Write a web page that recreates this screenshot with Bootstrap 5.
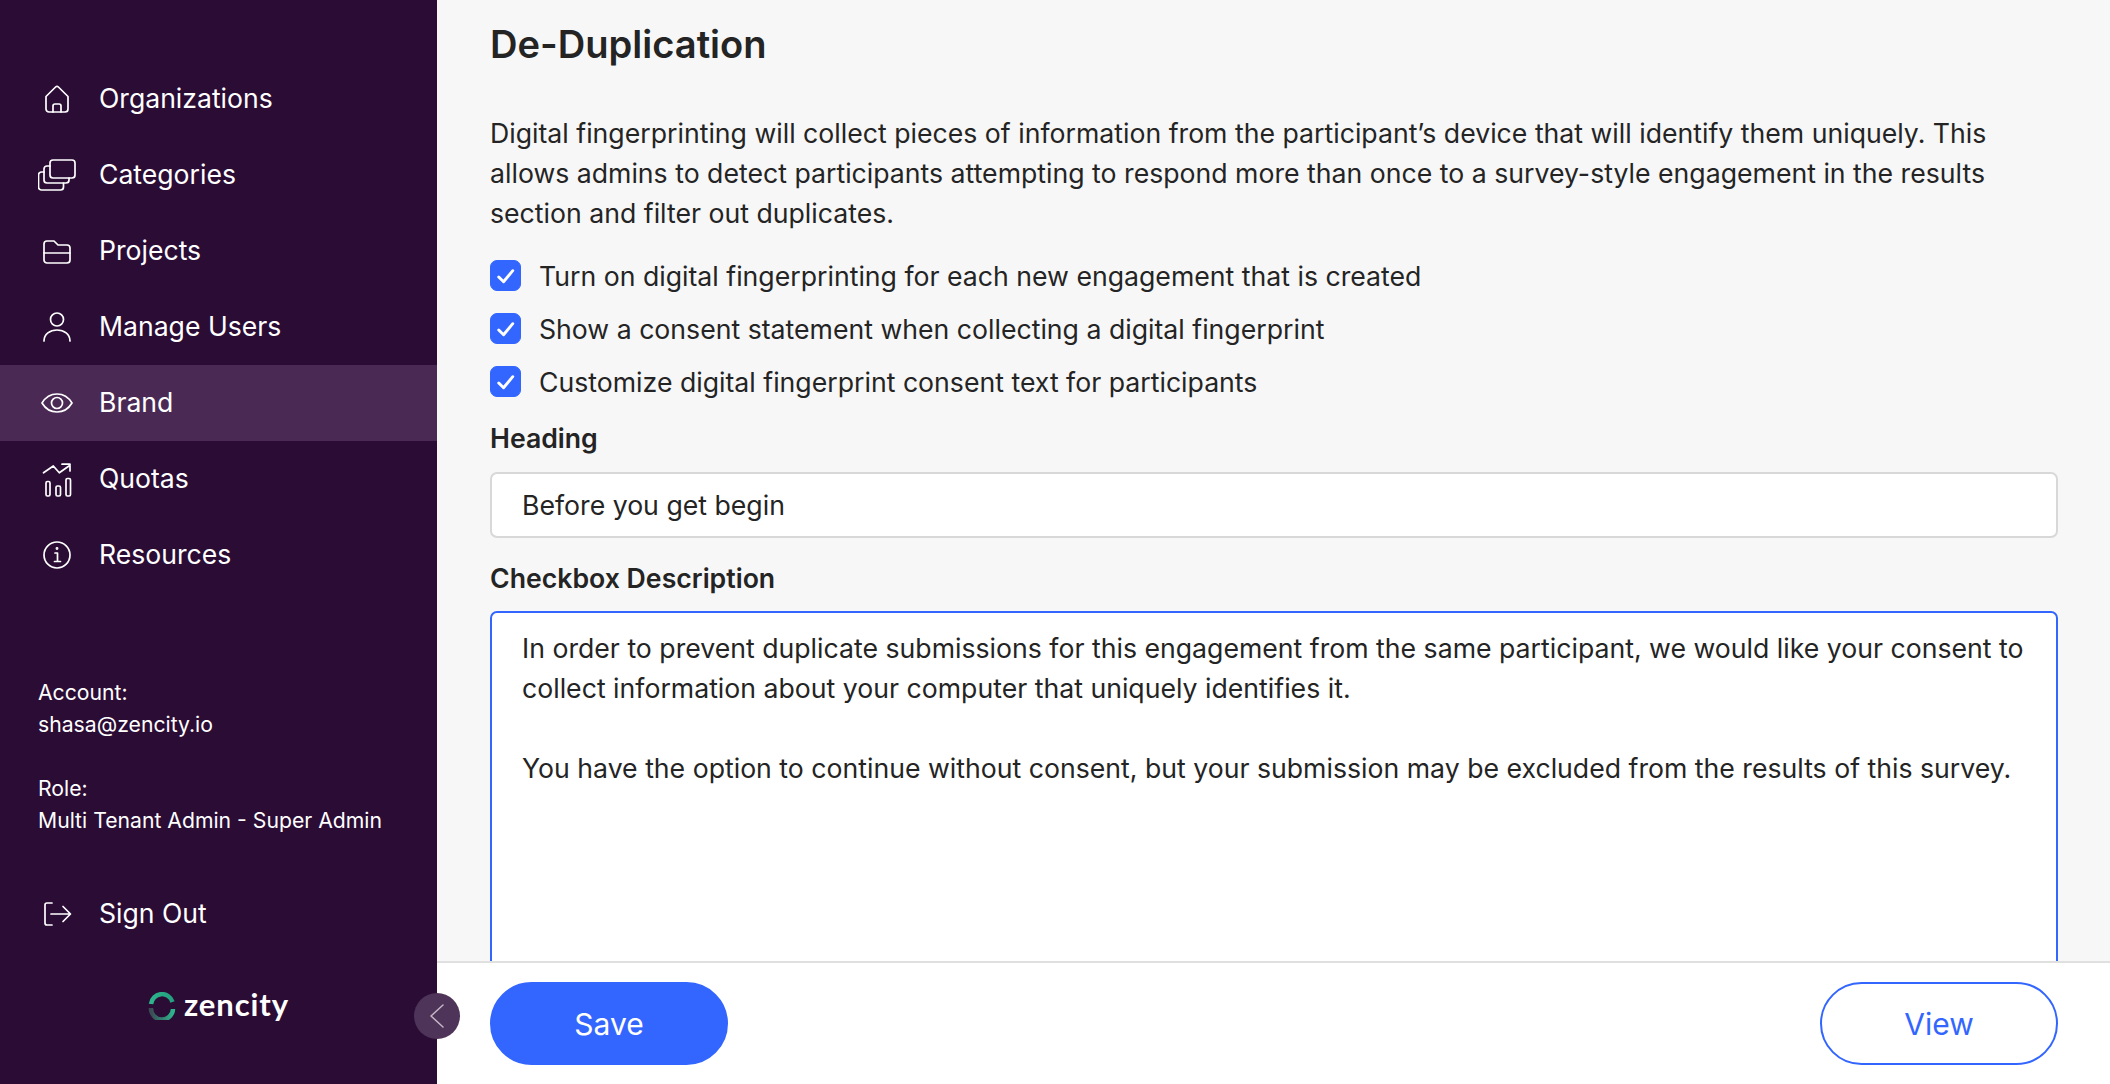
<!DOCTYPE html>
<html lang="en">
<head>
<meta charset="utf-8">
<title>De-Duplication</title>
<link href="https://cdn.jsdelivr.net/npm/bootstrap@5.3.0/dist/css/bootstrap.min.css" rel="stylesheet">
<style>
html,body{height:100%;overflow:hidden}
body{font-family:Inter,"Liberation Sans",sans-serif;background:#fff;color:#242424;font-size:26.67px;line-height:40px}
.app-shell{height:1084px;width:2110px}
.side{width:437px;flex:0 0 437px;background:#2b0c35;color:#fff;padding-top:61px}
.side-link{height:76px;padding:0 0 2px 38px;color:#fff;font-size:26.6px;gap:23px;text-decoration:none}
.side-link:hover{color:#fff}
.side-link.is-on{background:#4a2a55}
.ico{width:38px;height:38px;flex:0 0 38px;fill:none;stroke:#fff;stroke-width:1.7;stroke-linecap:round;stroke-linejoin:round;margin-top:2px}
.who{padding:0 0 0 38px;margin-top:83px;font-size:21.2px;line-height:32px}
.who p{margin:0 0 32px}
.sign{margin-top:40px}
.brand-row{margin-top:24px;gap:8px;height:60px}
.brand-word{font-size:31px;font-weight:700;font-family:Lato,Inter,sans-serif;line-height:1;letter-spacing:.9px;padding-bottom:4px}
.main-col{min-width:0}
.scroller{background:#f7f7f7;overflow:hidden;padding:18px 52px 0 53px}
.page-title{font-size:38.1px;font-weight:600;line-height:52px;margin:0 0 43px}
.intro{margin:0 0 27px}
.chk{display:flex;align-items:center;gap:18px;min-height:30px;padding:0;margin:0 0 22px}
.chk .form-check-input{width:31px;height:31px;margin:0;border-radius:7px;flex:none;float:none;background-color:#3366ff;border-color:#3366ff;background-size:100%;background-image:url("data:image/svg+xml,%3csvg xmlns='http://www.w3.org/2000/svg' viewBox='0 0 30 30'%3e%3cpath fill='none' stroke='%23fff' stroke-linecap='round' stroke-linejoin='round' stroke-width='3' d='M8 16.500l5 5 9.500-11.500'/%3e%3c/svg%3e")}
.chk .form-check-label{line-height:30px}
.chk-last{margin-bottom:21px}
.fld-label{font-weight:600;line-height:40px;margin:0 0 13px;display:block}
.scroller .form-control{font-size:26.67px;line-height:40px;color:#242424;border:2px solid #d8d8d8;border-radius:7px;padding:11px 30px;height:66px;box-shadow:none;margin-bottom:20px}
.scroller input.form-control{margin-top:14px}
.scroller textarea.form-control{height:500px;border-color:#3366ff;padding:15px 30px;resize:none}
.foot{height:123px;flex:0 0 123px;border-top:2px solid #e0e0e0;background:#fff;padding:0 52px 0 53px}
.foot .btn{width:238px;height:83px;font-size:30px;line-height:1;border-width:2px}
.go{background:#3366ff;border-color:#3366ff;color:#fff}
.ghost{background:#fff;border-color:#3366ff;color:#3366ff}
.collapse-dot{position:absolute;left:414px;top:993px;width:46px;height:46px;background:#4e3458;border-radius:50%;display:flex;align-items:center;justify-content:center}
.collapse-dot svg{width:24px;height:24px;fill:none;stroke:#c4b8c8;stroke-width:1.5;stroke-linecap:round;stroke-linejoin:round}
</style>
</head>
<body>
<div class="app-shell d-flex position-relative">
  <aside class="side d-flex flex-column">
    <nav class="nav flex-column flex-nowrap">
      <a class="side-link d-flex align-items-center" href="#">
        <svg class="ico" viewBox="0 0 38 38"><path d="M8 16.500 17.600 7a2 2 0 0 1 2.800 0L30 16.500V29a3 3 0 0 1-3 3H11a3 3 0 0 1-3-3z"/><path d="M15 32v-6a2 2 0 0 1 2-2h4a2 2 0 0 1 2 2v6"/></svg>Organizations</a>
      <a class="side-link d-flex align-items-center" href="#">
        <svg class="ico" viewBox="0 0 38 38"><rect x="12" y="4" width="25" height="18" rx="3"/><path d="M12 10H9a3 3 0 0 0-3 3v11a3 3 0 0 0 3 3h19a3 3 0 0 0 3-3v-2"/><path d="M6 16H3.500a3 3 0 0 0-3 3v12a3 3 0 0 0 3 3h19a3 3 0 0 0 3-3v-4"/></svg>Categories</a>
      <a class="side-link d-flex align-items-center" href="#">
        <svg class="ico" viewBox="0 0 38 38"><path d="M6 12a3 3 0 0 1 3-3h7l4 4h9a3 3 0 0 1 3 3v12a3 3 0 0 1-3 3H9a3 3 0 0 1-3-3z"/><path d="M6 21h26"/></svg>Projects</a>
      <a class="side-link d-flex align-items-center" href="#">
        <svg class="ico" viewBox="0 0 38 38"><circle cx="19" cy="11.500" r="6.500"/><path d="M6 33c0-7 6-11 13-11s13 4 13 11"/></svg>Manage Users</a>
      <a class="side-link is-on d-flex align-items-center" href="#">
        <svg class="ico" viewBox="0 0 38 38"><path d="M4 19c3.500-5.800 9-9 15-9s11.500 3.200 15 9c-3.500 5.800-9 9-15 9S7.500 24.800 4 19z"/><circle cx="19" cy="19" r="5.500"/></svg>Brand</a>
      <a class="side-link d-flex align-items-center" href="#">
        <svg class="ico" viewBox="0 0 38 38"><path d="M5.500 12.800 15.300 6l6 6.800L32 5.200M24 4.200h8V11"/><rect x="8" y="21.500" width="4" height="14.500" rx="1.500"/><rect x="18" y="26" width="4.500" height="10" rx="1.500"/><rect x="28" y="18.500" width="4.500" height="17.500" rx="1.500"/></svg>Quotas</a>
      <a class="side-link d-flex align-items-center" href="#">
        <svg class="ico" viewBox="0 0 38 38"><circle cx="19" cy="19" r="13"/><path d="M17 17h2.500v8M16.500 25.500h6"/><circle cx="19" cy="12.500" r=".6"/></svg>Resources</a>
    </nav>
    <div class="who">
      <p>Account:<br>shasa@zencity.io</p>
      <p class="mb-0">Role:<br>Multi Tenant Admin - Super Admin</p>
    </div>
    <a class="side-link sign d-flex align-items-center" href="#">
      <svg class="ico" viewBox="0 0 38 38"><path d="M14 8H9a2 2 0 0 0-2 2v18a2 2 0 0 0 2 2h5M13 19h19M25 11.500l7.500 7.500-7.500 7.500"/></svg>Sign Out</a>
    <div class="brand-row d-flex align-items-center justify-content-center">
      <svg width="28" height="28" viewBox="0 0 28 28" fill="none" stroke-width="4.500">
        <defs>
          <linearGradient id="arcA" x1="0" y1="0" x2="1" y2="0"><stop offset="0" stop-color="#2db58c"/><stop offset="1" stop-color="#23a07f"/></linearGradient>
          <linearGradient id="arcB" x1="0" y1="0" x2="1" y2="0"><stop offset="0" stop-color="#3b4a55"/><stop offset="1" stop-color="#2db58c"/></linearGradient>
        </defs>
        <path d="M3 12A11 11 0 0 1 24.500 10" stroke="url(#arcA)"/>
        <path d="M25 17A11 11 0 0 1 3 16" stroke="url(#arcB)"/>
      </svg>
      <span class="brand-word">zencity</span>
    </div>
  </aside>
  <div class="main-col flex-grow-1 d-flex flex-column">
    <main class="scroller flex-grow-1">
      <h1 class="page-title">De-Duplication</h1>
      <p class="intro">Digital fingerprinting will collect pieces of information from the participant’s device that will identify them uniquely. This allows admins to detect participants attempting to respond more than once to a survey-style engagement in the results section and filter out duplicates.</p>
      <div class="form-check chk"><input class="form-check-input" type="checkbox" id="c1" checked><label class="form-check-label" for="c1">Turn on digital fingerprinting for each new engagement that is created</label></div>
      <div class="form-check chk"><input class="form-check-input" type="checkbox" id="c2" checked><label class="form-check-label" for="c2">Show a consent statement when collecting a digital fingerprint</label></div>
      <div class="form-check chk chk-last"><input class="form-check-input" type="checkbox" id="c3" checked><label class="form-check-label" for="c3">Customize digital fingerprint consent text for participants</label></div>
      <label class="fld-label mb-0" for="f1">Heading</label>
      <input id="f1" class="form-control" type="text" value="Before you get begin">
      <label class="fld-label" for="f2">Checkbox Description</label>
      <textarea id="f2" class="form-control">In order to prevent duplicate submissions for this engagement from the same participant, we would like your consent to collect information about your computer that uniquely identifies it.

You have the option to continue without consent, but your submission may be excluded from the results of this survey.</textarea>
    </main>
    <footer class="foot d-flex align-items-center justify-content-between">
      <button class="btn go rounded-pill" type="button">Save</button>
      <button class="btn ghost rounded-pill" type="button">View</button>
    </footer>
  </div>
  <div class="collapse-dot"><svg viewBox="0 0 24 24"><path d="M18 1 6 12l12 11"/></svg></div>
</div>
<script src="https://cdn.jsdelivr.net/npm/bootstrap@5.3.0/dist/js/bootstrap.bundle.min.js"></script>
</body>
</html>
